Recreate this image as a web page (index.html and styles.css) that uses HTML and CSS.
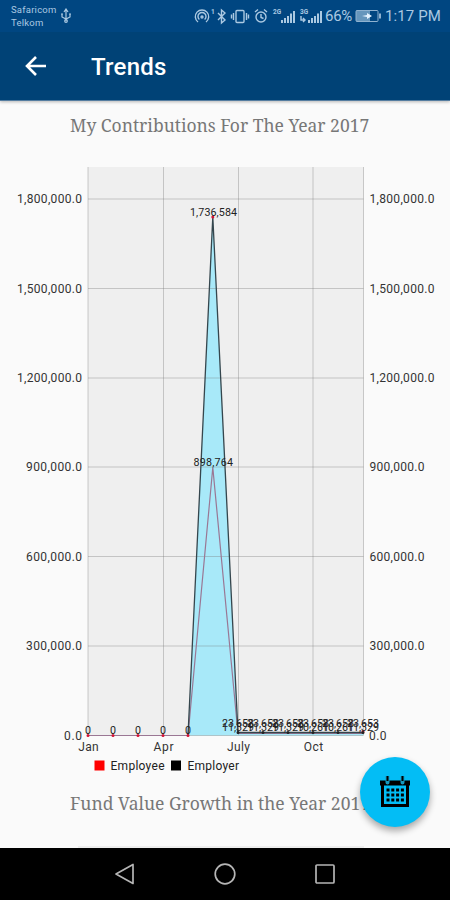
FILE: index.html
```html
<!DOCTYPE html>
<html lang="en">
<head>
<meta charset="utf-8">
<title>Trends</title>
<link rel="stylesheet" href="styles.css">
</head>
<body>
<header class="top">
  <div class="status">
    <div class="carriers"><span>Safaricom</span><span>Telkom</span></div>
    <svg class="usb" width="12" height="16" viewBox="0 0 12 16"><path d="M6 2v11M2 6v3l4 2 4-2V6M4 4l2-3 2 3"/><circle cx="6" cy="13" r="1.3"/><path d="M1 6h2M9 6h2"/></svg>
    <svg class="indicators" width="133" height="20" viewBox="0 0 133 20">
      <g class="line">
        <path d="M4 16a6.700 6.700 0 1 1 8 0M5.400 13.500a4 4 0 1 1 5.200 0"/><circle cx="8" cy="11" r="1"/>
        <path d="M24 7l7 7-3.500 3V4l3.500 3-7 7"/>
        <rect x="42" y="4.500" width="8" height="12" rx="1"/><path d="M39.500 7v7M52.500 7v7M37.500 8.500v4M54.500 8.500v4"/>
        <circle cx="67" cy="11" r="5"/><path d="M67 8v3.500l2.500 1M61 6l3-2.500M73 6l-3-2.500"/>
        <path d="M107 10v4h4M109 12l2 2-2 2"/>
      </g>
      <g class="solid">
        <path d="M87 14h2v3h-2zM90 12h2v5h-2zM93 10h2v7h-2zM96 7.500h2v9.500h-2zM99 5h2v12h-2z"/>
        <path d="M114 14h2v3h-2zM117 12h2v5h-2zM120 10h2v7h-2zM123 7.500h2v9.500h-2zM126 5h2v12h-2z"/>
      </g>
      <text x="17" y="8" class="tiny">1</text>
      <text x="79" y="8" class="tiny">2G</text>
      <text x="106" y="8" class="tiny">3G</text>
    </svg>
    <span class="percent">66%</span>
    <svg class="battery" width="27" height="14" viewBox="0 0 27 14"><rect class="cell" x="1" y="1.500" width="14" height="11"/><rect class="case" x="1" y="1.500" width="22" height="11" rx="1"/><path class="bolt" d="M7 7l5-1V4l5 3-5 3V8z"/><path class="cap" d="M24 4.500h2v5h-2z"/></svg>
    <span class="clock">1:17 PM</span>
  </div>
  <div class="appbar">
    <svg width="24" height="24" viewBox="0 0 24 24" class="back"><path d="M22 12H3M12 3L3 12l9 9"/></svg>
    <h1>Trends</h1>
  </div>
</header>
<main>
  <h2 class="first">My Contributions For The Year 2017</h2>
  <svg class="chart" width="450" height="640" viewBox="0 140 450 640">
    <rect class="plot" x="88" y="167" width="275.500" height="568.500"/>
    <path class="area" d="M188 735.500L212.800 217 238 732H363.500V735.500z"/>
    <path class="grid" d="M88 199H363.500M88 288.500H363.500M88 378H363.500M88 467H363.500M88 556.500H363.500M88 646H363.500M88 735.500H363.500M163.500 167V735M238.500 167V735M313 167V735M88 167V735M363.500 167V735"/>
    <path class="employee" d="M88 735.500H188L212.800 467.500 238 733.500H363.500"/>
    <path class="employer" d="M188 735.500L212.800 217 238 732.500H363.500"/>
    <path class="dots" d="M88 735.500h.01M113 735.500h.01M138 735.500h.01M163 735.500h.01M188 735.500h.01M212.800 217h.01M363 731.500h.01"/>
    <path class="dots dark" d="M238 732.500h.01M263 732.500h.01M288 732.500h.01M313 732.500h.01M338 732.500h.01M363 732.500h.01"/>
    <g class="axis end">
      <text x="82" y="203" textLength="65">1,800,000.0</text><text x="82" y="292.500" textLength="65">1,500,000.0</text><text x="82" y="382" textLength="65">1,200,000.0</text><text x="82" y="471" textLength="56">900,000.0</text><text x="82" y="560.500" textLength="56">600,000.0</text><text x="82" y="650" textLength="56">300,000.0</text><text x="82" y="740" textLength="18">0.0</text>
    </g>
    <g class="axis">
      <text x="369.500" y="203" textLength="65">1,800,000.0</text><text x="369.500" y="292.500" textLength="65">1,500,000.0</text><text x="369.500" y="382" textLength="65">1,200,000.0</text><text x="369.500" y="471" textLength="55">900,000.0</text><text x="369.500" y="560.500" textLength="55">600,000.0</text><text x="369.500" y="650" textLength="55">300,000.0</text><text x="369" y="740" textLength="17.500">0.0</text>
    </g>
    <g class="axis mid">
      <text x="88.500" y="750.500" textLength="20.500">Jan</text><text x="163.500" y="750.500" textLength="20">Apr</text><text x="238.500" y="750.500" textLength="23">July</text><text x="313.500" y="750.500" textLength="19.500">Oct</text>
    </g>
    <g class="value">
      <text x="88" y="733.500">0</text><text x="113" y="733.500">0</text><text x="138" y="733.500">0</text><text x="163" y="733.500">0</text><text x="188" y="733.500">0</text>
      <text x="213.500" y="215.500" textLength="47">1,736,584</text><text x="213.300" y="466" textLength="39.500">898,764</text>
      <text x="238" y="726.500">23,658</text><text x="263" y="726.500">23,658</text><text x="288" y="726.500">23,658</text><text x="313" y="726.500">23,658</text><text x="338" y="726.500">23,658</text><text x="363" y="726.500">23,653</text>
      <text x="238" y="730.500">11,329</text><text x="263" y="730.500">11,329</text><text x="288" y="730.500">11,329</text><text x="313" y="730.500">10,261</text><text x="338" y="730.500">10,261</text><text x="363" y="730.500">11,329</text>
    </g>
    <rect x="94.500" y="760.500" width="10" height="10" fill="#f00"/><rect x="171" y="760.500" width="10" height="10" fill="#000"/>
    <g class="legend"><text x="110.500" y="770" textLength="54">Employee</text><text x="187.500" y="770" textLength="51.500">Employer</text></g>
  </svg>
  <h2 class="second">Fund Value Growth in the Year 2017</h2>
  <div class="next-chart"></div>
  <button class="fab" aria-label="Choose date">
    <svg width="32" height="32" viewBox="0 0 32 32"><path d="M1 4.500h30v5H1z"/><path class="frame" d="M3.500 8v21.500h25V8"/><path class="ring" d="M8.500 1v5.500M23.500 1v5.500"/><path class="pin" d="M8.500 0v5M23.500 0v5"/><path class="cells" d="M7.500 14h17.500M7.500 19h17.500M7.500 24h17.500"/></svg>
  </button>
</main>
<nav>
  <svg width="22" height="22" viewBox="0 0 22 22"><path d="M19 1.500v19L2 11z"/></svg>
  <svg width="22" height="22" viewBox="0 0 22 22"><circle cx="11" cy="11" r="9.800"/></svg>
  <svg width="22" height="22" viewBox="0 0 22 22"><rect x="2" y="2" width="18" height="18" rx="1"/></svg>
</nav>
</body>
</html>
```
FILE: styles.css
```css
* { box-sizing: border-box; }
body { margin: 0; width: 450px; height: 900px; display: flex; flex-direction: column; overflow: hidden; background: #fafafa; font-family: Roboto, sans-serif; }
.top { height: 101px; flex: none; background: #004276; border-bottom: 1px solid #557da0; box-shadow: 0 1px 3px #0004; }
.status { height: 32px; display: flex; align-items: center; padding-left: 11px; background: #004681; color: #abc9e2; }
.carriers { width: 46px; display: flex; flex-direction: column; font-size: 9.5px; line-height: 13px; letter-spacing: .22px; margin-top: -1px; }
.usb { margin-left: 3px; fill: none; stroke: #abc9e2; stroke-width: 1.2; }
.indicators { margin-left: 122px; flex: none; }
.indicators .line { fill: none; stroke: #abc9e2; stroke-width: 1.4; }
.indicators .solid, .tiny { fill: #abc9e2; }
.tiny { font-size: 6.5px; font-weight: 700; }
.percent { width: 29px; margin-left: -2px; font-size: 15px; letter-spacing: -.3px; }
.battery { margin-left: 1px; flex: none; }
.cell { fill: #6696bc; }
.case { fill: none; stroke: #8fb2d0; }
.bolt { fill: #e4f2ff; }
.cap { fill: #8fb2d0; }
.clock { margin-left: 3px; font-size: 15px; letter-spacing: .1px; white-space: nowrap; }
.appbar { height: 68px; display: flex; align-items: center; padding-left: 24px; }
.back { fill: none; stroke: #fff; stroke-width: 2.6; }
h1 { margin: 2px 0 0 43px; color: #fff; font-size: 24px; font-weight: 500; line-height: 30px; letter-spacing: .25px; }
main { position: relative; height: 747px; flex: none; overflow: hidden; }
h2 { margin: 0; height: 24px; padding-left: 70px; color: #777; font: 400 17.5px/24px "Noto Serif", "Droid Serif", "DejaVu Serif Condensed", "DejaVu Serif", serif; font-stretch: condensed; white-space: nowrap; }
.first { margin-top: 12px; letter-spacing: -.01px; }
.chart { display: block; margin-top: 3px; }
.second { margin-top: 11px; letter-spacing: -.01px; }
.next-chart { width: 286px; height: 2px; margin: 31px 0 0 78px; background: #eee; }
.plot { fill: #efefef; }
.area { fill: #a8e9f9; }
.grid { fill: none; stroke: #777; stroke-opacity: .36; stroke-width: 1; }
.employee { fill: none; stroke: #9a7794; stroke-width: 1.2; }
.employer { fill: none; stroke: #35464d; stroke-width: 1.3; }
.dots { stroke: #d41535; stroke-width: 3; stroke-linecap: round; }
.dots.dark { stroke: #222; }
.axis { font-size: 12px; fill: #333; }
.end { text-anchor: end; }
.mid, .value { text-anchor: middle; }
.value { font-size: 10.7px; fill: #222; }
.legend { font-size: 12px; fill: #222; }
.fab { position: absolute; right: 20px; bottom: 21px; width: 70px; height: 70px; padding: 0; border: 0; border-radius: 50%; background: #03bdf5; display: grid; place-items: center; box-shadow: 0 4px 7px #0005; }
.frame { fill: none; stroke: #000; stroke-width: 3; }
.ring { stroke: #1599bf; stroke-width: 4; stroke-linecap: round; }
.pin { stroke: #000; stroke-width: 2; }
.cells { fill: none; stroke: #000; stroke-width: 3; stroke-dasharray: 3 1.8; }
nav { height: 52px; flex: none; background: #000; display: flex; align-items: center; justify-content: center; gap: 78px; }
nav svg { fill: none; stroke: #b5b5b5; stroke-width: 1.7; stroke-linejoin: round; }
```
